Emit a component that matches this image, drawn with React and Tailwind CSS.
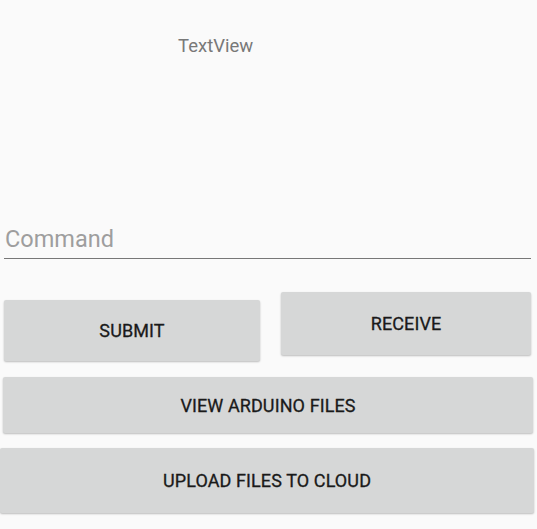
export default function App() {
  const btn =
    "flex items-center justify-center bg-[#d6d7d7] rounded-[2px] shadow-[0_1px_2px_rgba(0,0,0,0.25)] text-[18px] font-normal text-[#1a1a1a] tracking-[0.1px] [-webkit-text-stroke:0.3px_#1a1a1a]";
  return (
    <div
      className="w-[537px] h-[529px] bg-[#fafafa] overflow-hidden flex flex-col"
      style={{ fontFamily: "Roboto, 'Liberation Sans', sans-serif" }}
    >
      <div className="pt-[34px] pl-[178px] text-[18.5px] leading-[24px] text-[#787878]">TextView</div>
      <div className="mt-[165px] mx-[4px] w-[527px] border-b border-[#777777] pb-[3px] pl-[1px] text-[23.5px] leading-[32px] text-[#9e9e9e]">
        Command
      </div>
      <div className="flex items-start mt-[33px]">
        <div className={`${btn} ml-[4px] mt-[8px] w-[256px] h-[61px]`}>SUBMIT</div>
        <div className={`${btn} ml-[21px] w-[250px] h-[63px]`}>RECEIVE</div>
      </div>
      <div className={`${btn} ml-[3px] mt-[16px] w-[530px] h-[56px]`}>VIEW ARDUINO FILES</div>
      <div className={`${btn} mt-[15px] w-[534px] h-[65px]`}>UPLOAD FILES TO CLOUD</div>
    </div>
  );
}
